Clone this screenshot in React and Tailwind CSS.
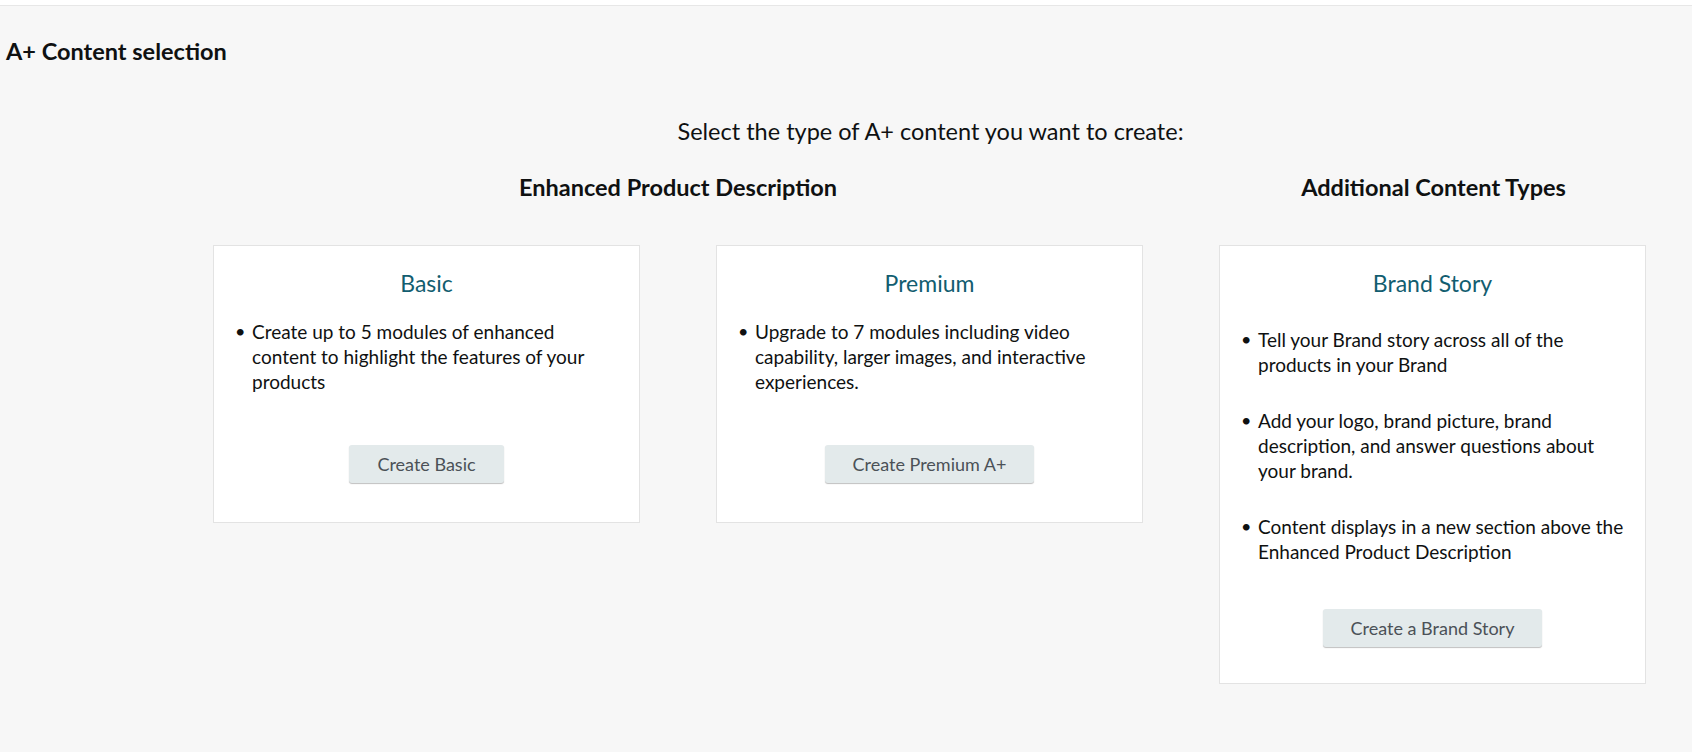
const cards = [
  {
    title: 'Basic',
    items: ['Create up to 5 modules of enhanced content to highlight the features of your products'],
    button: 'Create Basic',
  },
  {
    title: 'Premium',
    items: ['Upgrade to 7 modules including video capability, larger images, and interactive experiences.'],
    button: 'Create Premium A+',
  },
]

const brandItems = [
  'Tell your Brand story across all of the products in your Brand',
  'Add your logo, brand picture, brand description, and answer questions about your brand.',
  'Content displays in a new section above the Enhanced Product Description',
]

function Card({ title, children, button, className = 'pb-[39px]' }) {
  return (
    <div className={`flex w-[427px] flex-col border border-[#e3e3e3] bg-white px-[21px] pt-[22px] ${className}`}>
      <h3 className="text-center text-[23px] leading-[30px] text-[#125d70]">{title}</h3>
      {children}
      <div className="flex justify-center">
        <button className="h-[38px] rounded-[3px] bg-[#e3eaeb] px-[28px] text-[18px] text-[#4b5157] shadow-[0_1px_1px_rgba(0,0,0,0.25)]">
          {button}
        </button>
      </div>
    </div>
  )
}

function Bullets({ items, className }) {
  return (
    <ul className={className}>
      {items.map((item) => (
        <li key={item} className="flex">
          <span className="w-[17px] shrink-0 text-[18px] leading-[25px]">•</span>
          <span>{item}</span>
        </li>
      ))}
    </ul>
  )
}

export default function App() {
  return (
    <div className="min-h-screen bg-[#f7f7f7] font-['Lato',sans-serif] text-[#0f1111]">
      <div className="h-[6px] border-b border-[#e7e7e7] bg-white" />
      <h1 className="px-[6px] pt-[30px] text-[23.5px] font-bold leading-[30px]">A+ Content selection</h1>

      <div className="ml-[213px] w-[1435px]">
        <p className="mt-[50px] text-center text-[23.5px] leading-[30px]">Select the type of A+ content you want to create:</p>

        <div className="mt-[26px] flex gap-[76px]">
          <div className="flex w-[930px] flex-col">
            <h2 className="text-center text-[23.5px] font-bold leading-[30px]">Enhanced Product Description</h2>
            <div className="mt-[43px] flex items-start gap-[76px]">
              {cards.map((c) => (
                <Card key={c.title} title={c.title} button={c.button}>
                  <Bullets items={c.items} className="mb-[51px] mt-[21px] text-[19px] leading-[25px]" />
                </Card>
              ))}
            </div>
          </div>

          <div className="flex w-[429px] flex-col">
            <h2 className="text-center text-[23.5px] font-bold leading-[30px]">Additional Content Types</h2>
            <div className="mt-[43px]">
              <Card title="Brand Story" button="Create a Brand Story" className="pb-[36px]">
                <Bullets items={brandItems} className="mb-[45px] mt-[29px] flex flex-col gap-[31px] text-[19px] leading-[25px]" />
              </Card>
            </div>
          </div>
        </div>
      </div>
    </div>
  )
}
